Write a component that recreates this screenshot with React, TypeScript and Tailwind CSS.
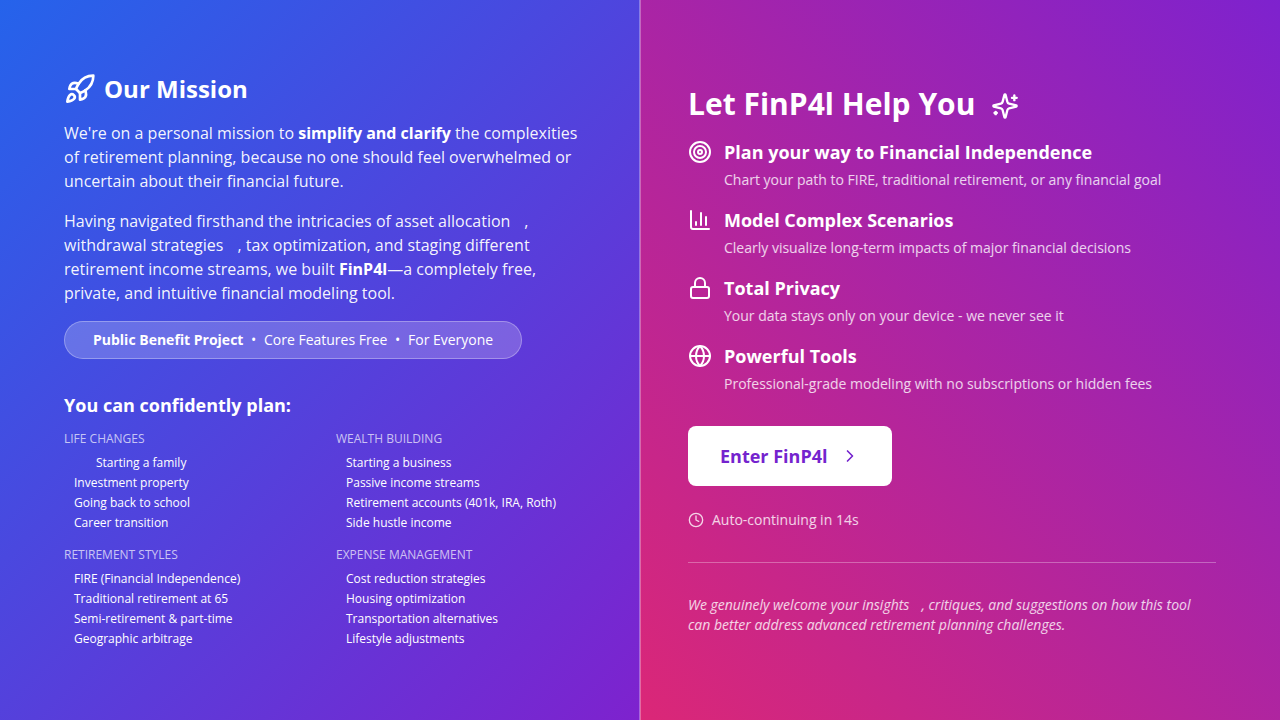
import { useState, type ReactNode } from 'react'
import { ChevronRight, Clock, Globe, Lock, Target } from 'lucide-react'

type IconProps = { className?: string }

const planGroups = [
  {
    title: 'LIFE CHANGES',
    items: ['Starting a family', 'Investment property', 'Going back to school', 'Career transition'],
  },
  {
    title: 'WEALTH BUILDING',
    items: ['Starting a business', 'Passive income streams', 'Retirement accounts (401k, IRA, Roth)', 'Side hustle income'],
  },
  {
    title: 'RETIREMENT STYLES',
    items: ['FIRE (Financial Independence)', 'Traditional retirement at 65', 'Semi-retirement & part-time', 'Geographic arbitrage'],
  },
  {
    title: 'EXPENSE MANAGEMENT',
    items: ['Cost reduction strategies', 'Housing optimization', 'Transportation alternatives', 'Lifestyle adjustments'],
  },
]

function StrokeIcon({ className, children }: IconProps & { children: ReactNode }) {
  return (
    <svg
      viewBox="0 0 24 24"
      fill="none"
      stroke="currentColor"
      strokeWidth="2"
      strokeLinecap="round"
      strokeLinejoin="round"
      aria-hidden="true"
      className={className}
    >
      {children}
    </svg>
  )
}

function RocketIcon({ className }: IconProps) {
  return (
    <StrokeIcon className={className}>
      <path d="M4.5 16.5c-1.5 1.26-2 5-2 5s3.74-.5 5-2c.71-.84.7-2.13-.09-2.91a2.18 2.18 0 0 0-2.91-.09z" />
      <path d="m12 15-3-3a22 22 0 0 1 2-3.95A12.88 12.88 0 0 1 22 2c0 2.72-.78 7.5-6 11a22.35 22.35 0 0 1-4 2z" />
      <path d="M9 12H4s.55-3.03 2-4c1.62-1.08 5 0 5 0" />
      <path d="M12 15v5s3.03-.55 4-2c1.08-1.62 0-5 0-5" />
    </StrokeIcon>
  )
}

function SparklesIcon({ className }: IconProps) {
  return (
    <StrokeIcon className={className}>
      <path d="M9.937 15.5A2 2 0 0 0 8.5 14.063l-6.135-1.582a.5.5 0 0 1 0-.962L8.5 9.936A2 2 0 0 0 9.937 8.5l1.582-6.135a.5.5 0 0 1 .963 0L14.063 8.5A2 2 0 0 0 15.5 9.937l6.135 1.581a.5.5 0 0 1 0 .964L15.5 14.063a2 2 0 0 0-1.437 1.437l-1.582 6.135a.5.5 0 0 1-.963 0z" />
      <path d="M20 3v4" />
      <path d="M22 5h-4" />
      <path d="M4 17v2" />
      <path d="M5 18H3" />
    </StrokeIcon>
  )
}

function BarChartIcon({ className }: IconProps) {
  return (
    <StrokeIcon className={className}>
      <path d="M3 3v16a2 2 0 0 0 2 2h16" />
      <path d="M18 17V9" />
      <path d="M13 17V5" />
      <path d="M8 17v-3" />
    </StrokeIcon>
  )
}

const features = [
  {
    icon: Target,
    title: 'Plan your way to Financial Independence',
    text: 'Chart your path to FIRE, traditional retirement, or any financial goal',
  },
  {
    icon: BarChartIcon,
    title: 'Model Complex Scenarios',
    text: 'Clearly visualize long-term impacts of major financial decisions',
  },
  {
    icon: Lock,
    title: 'Total Privacy',
    text: 'Your data stays only on your device - we never see it',
  },
  {
    icon: Globe,
    title: 'Powerful Tools',
    text: 'Professional-grade modeling with no subscriptions or hidden fees',
  },
]

function MissionPanel() {
  return (
    <section className="flex flex-col justify-center bg-[linear-gradient(135deg,#2563eb,#7e22ce)] py-12 pl-16 pr-12">
      <div className="mb-4 flex items-center gap-2">
        <RocketIcon className="h-8 w-8" />
        <h2 className="text-2xl font-bold">Our Mission</h2>
      </div>

      <p className="mb-4 text-base text-white/95">
        We're on a personal mission to <strong className="text-white">simplify and clarify</strong> the
        complexities of retirement planning, because no one should feel overwhelmed or uncertain about their
        financial future.
      </p>
      <p className="mb-4 text-base text-white/95">
        Having navigated firsthand the intricacies of asset allocation<span className="ml-3.5">,</span>{' '}
        withdrawal strategies<span className="ml-3.5">,</span> tax optimization, and staging different
        retirement income streams, we built <strong className="text-white">FinP4l</strong>—a completely free,
        private, and intuitive financial modeling tool.
      </p>

      {/* Tagline pill */}
      <p className="mb-8 self-start rounded-full border border-white/30 bg-white/20 px-7 py-2 text-sm">
        <strong>Public Benefit Project</strong> <span className="mx-1">•</span> Core Features Free{' '}
        <span className="mx-1">•</span> For Everyone
      </p>

      <h3 className="mb-3 text-lg/7 font-bold">You can confidently plan:</h3>
      <div className="grid grid-cols-2 gap-4 text-xs">
        {planGroups.map((group, g) => (
          <div key={group.title}>
            <h4 className="mb-2 text-white/70">{group.title}</h4>
            <ul className="space-y-1">
              {group.items.map((item, i) => (
                <li key={item} className={g === 0 && i === 0 ? 'pl-8' : 'pl-2.5'}>
                  {item}
                </li>
              ))}
            </ul>
          </div>
        ))}
      </div>
    </section>
  )
}

function HelpPanel() {
  const [entered, setEntered] = useState(false)

  return (
    <section className="flex flex-col justify-center bg-[linear-gradient(45deg,#db2777,#7e22ce)] py-12 pl-12 pr-16">
      <div className="mb-4 flex items-center gap-4">
        <h2 className="text-3xl/9 font-bold">Let FinP4l Help You</h2>
        <SparklesIcon className="mt-1 h-7 w-7" />
      </div>

      <ul className="mb-8 space-y-4">
        {features.map(({ icon: Icon, title, text }) => (
          <li key={title} className="flex items-start gap-3">
            <Icon className="mt-0.5 h-6 w-6 shrink-0" />
            <div>
              <h3 className="mb-1 text-lg/7 font-bold">{title}</h3>
              <p className="text-sm text-white/80">{text}</p>
            </div>
          </li>
        ))}
      </ul>

      <button
        type="button"
        onClick={() => setEntered(true)}
        aria-pressed={entered}
        className="mb-6 flex cursor-pointer items-center gap-3 self-start rounded-lg bg-white px-8 py-4 text-lg/7 font-bold text-[#7423ce]"
      >
        Enter FinP4l
        <ChevronRight className="h-5 w-5" />
      </button>

      <div className="flex items-center gap-2 text-sm text-white/80">
        <Clock className="h-4 w-4" />
        <span>Auto-continuing in 14s</span>
      </div>

      <p className="mt-8 border-t border-white/30 pt-8 text-sm italic text-white/80">
        We genuinely welcome your insights<span className="ml-3">,</span> critiques, and suggestions on how this
        tool can better address advanced retirement planning challenges.
      </p>
    </section>
  )
}

export default function App() {
  return (
    <main className="relative grid min-h-screen grid-cols-2 font-['Open_Sans','Noto_Sans',sans-serif] text-white">
      <MissionPanel />
      <HelpPanel />
      {/* Seam between the two panels */}
      <div className="absolute inset-y-0 left-1/2 w-0.5 -translate-x-1/2 bg-white/30" />
    </main>
  )
}
